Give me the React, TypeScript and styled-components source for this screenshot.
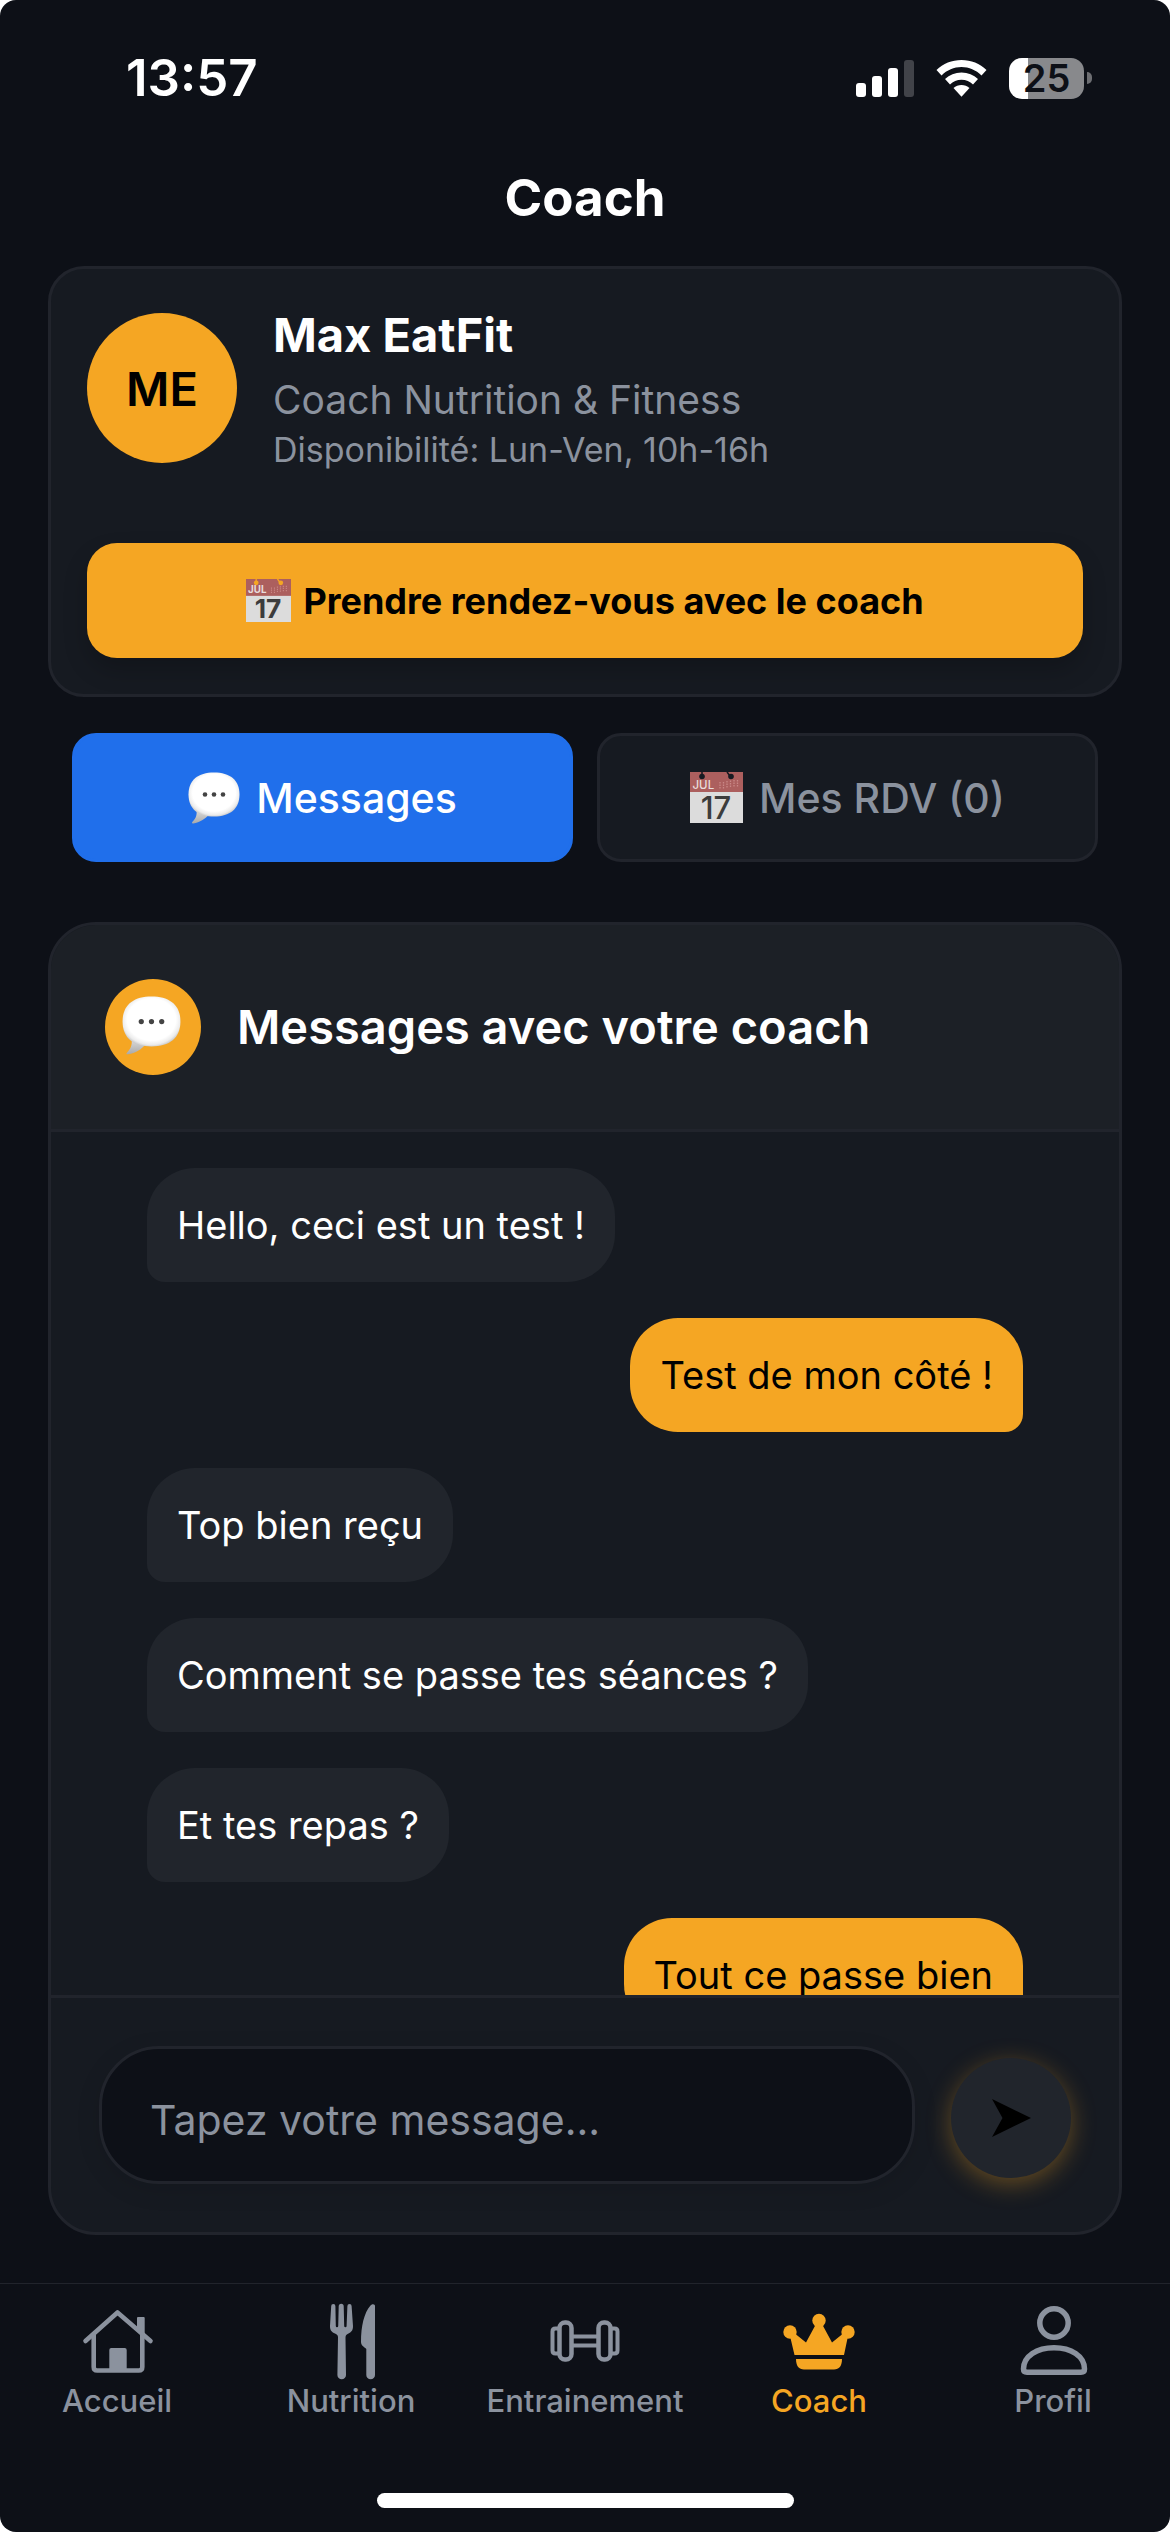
import React from 'react';
import styled, { createGlobalStyle } from 'styled-components';

const color = {
  page: '#0d1017',
  card: '#161a21',
  header: '#1c2026',
  line: '#21242c',
  bubble: '#21252c',
  muted: '#8b929e',
  amber: '#f5a623',
  blue: '#206feb',
};

const GlobalStyle = createGlobalStyle`
  * { box-sizing: border-box; }
  html, body { margin: 0; background: #fff; }
  body, button, input { font-family: Inter, 'Liberation Sans', sans-serif; }
  h1, h2, p, ul { margin: 0; padding: 0; }
`;

const Screen = styled.div`
  display: flex;
  flex-direction: column;
  min-height: 100vh;
  background: ${color.page};
  border-radius: 16px;
  overflow: hidden;
`;

const StatusBar = styled.div`
  display: flex;
  justify-content: space-between;
  align-items: center;
  height: 156px;
  padding: 0 78px 0 126px;
  color: #fff;
`;

const Clock = styled.time`
  font-size: 51px;
  font-weight: 600;
  line-height: 60px;
`;

const StatusIcons = styled.div`
  display: flex;
  align-items: center;
  gap: 22px;
`;

const Battery = styled.div`
  display: flex;
  align-items: center;
  gap: 3px;
`;

const BatteryBody = styled.div`
  display: flex;
  align-items: center;
  justify-content: center;
  width: 75px;
  height: 41px;
  border-radius: 13px;
  background: linear-gradient(to right, #fff 25%, #88898c 25%);
  color: ${color.page};
  font-size: 38px;
  font-weight: 600;
  line-height: 41px;
`;

const BatteryTip = styled.div`
  width: 5px;
  height: 12px;
  border-radius: 0 5px 5px 0;
  background: #6d6e72;
`;

const TitleBar = styled.header`
  display: flex;
  justify-content: center;
  height: 110px;
  padding-top: 10px;
  color: #fff;
`;

const Title = styled.h1`
  font-size: 51px;
  font-weight: 700;
  line-height: 64px;
`;

const Main = styled.main`
  display: flex;
  flex-direction: column;
  flex: 1;
  min-height: 0;
  padding: 0 48px;
`;

const Card = styled.section`
  border: 3px solid ${color.line};
  border-radius: 36px;
  background: ${color.card};
  padding: 36px;
`;

const CoachRow = styled.div`
  display: flex;
  align-items: center;
  gap: 36px;
  padding-bottom: 72px;
`;

const Avatar = styled.div`
  display: flex;
  align-items: center;
  justify-content: center;
  width: 150px;
  height: 150px;
  border-radius: 50%;
  background: ${color.amber};
  color: #000;
  font-size: 47px;
  font-weight: 600;
`;

const Heading = styled.h2<{ $bold?: boolean }>`
  color: #fff;
  font-size: 47px;
  font-weight: ${p => (p.$bold ? 700 : 600)};
  line-height: 60px;
`;

const Muted = styled.p<{ $small?: boolean }>`
  margin-top: ${p => (p.$small ? 4 : 9)}px;
  color: ${color.muted};
  font-size: ${p => (p.$small ? 34 : 39)}px;
  line-height: ${p => (p.$small ? 42 : 51)}px;
`;

const BookButton = styled.button`
  display: flex;
  align-items: center;
  justify-content: center;
  gap: 12px;
  width: 100%;
  height: 115px;
  border: 0;
  border-radius: 30px;
  background: ${color.amber};
  box-shadow: 0 12px 24px rgba(0, 0, 0, 0.2);
  color: #000;
  font-size: 36px;
  font-weight: 700;
`;

const Tabs = styled.div`
  display: flex;
  gap: 24px;
  padding: 36px 24px 60px;
`;

const Tab = styled.button<{ $active?: boolean }>`
  display: flex;
  flex: 1;
  align-items: center;
  justify-content: center;
  gap: 16px;
  height: 129px;
  border: 3px solid ${p => (p.$active ? color.blue : color.line)};
  border-radius: 24px;
  background: ${p => (p.$active ? color.blue : color.card)};
  color: ${p => (p.$active ? '#fff' : color.muted)};
  font-size: 41px;
  font-weight: 500;
`;

const ChatPanel = styled.section`
  display: flex;
  flex: 1;
  flex-direction: column;
  min-height: 0;
  border: 3px solid ${color.line};
  border-radius: 48px;
  background: ${color.card};
  overflow: hidden;
`;

const ChatHeader = styled.header`
  display: flex;
  align-items: center;
  gap: 36px;
  padding: 54px;
  border-bottom: 3px solid ${color.line};
  background: ${color.header};
`;

const ChatBadge = styled.div`
  display: flex;
  align-items: center;
  justify-content: center;
  width: 96px;
  height: 96px;
  padding: 0 3px 3px 0;
  border-radius: 50%;
  background: ${color.amber};
`;

const MessageList = styled.ul`
  display: flex;
  flex: 1 1 0;
  flex-direction: column;
  gap: 36px;
  min-height: 0;
  padding: 36px 96px;
  list-style: none;
  overflow: hidden;
`;

const Bubble = styled.li<{ $mine?: boolean }>`
  flex: none;
  align-self: ${p => (p.$mine ? 'flex-end' : 'flex-start')};
  padding: 30px;
  border-radius: ${p => (p.$mine ? '48px 48px 18px 48px' : '48px 48px 48px 18px')};
  background: ${p => (p.$mine ? color.amber : color.bubble)};
  color: ${p => (p.$mine ? '#000' : '#fff')};
  font-size: 38px;
  line-height: 54px;
`;

const Composer = styled.form`
  display: flex;
  align-items: flex-end;
  gap: 36px;
  padding: 48px;
  border-top: 3px solid ${color.line};
`;

const MessageInput = styled.input`
  flex: 1;
  min-width: 0;
  height: 138px;
  padding: 9px 48px 0;
  border: 3px solid ${color.line};
  border-radius: 60px;
  background: ${color.page};
  box-shadow: 0 6px 24px rgba(0, 0, 0, 0.1);
  color: #fff;
  font-size: 41px;
  outline: 0;
  &::placeholder { color: ${color.muted}; opacity: 1; }
`;

const SendButton = styled.button`
  display: flex;
  align-items: center;
  justify-content: center;
  width: 120px;
  height: 120px;
  margin-bottom: 6px;
  padding: 0;
  border: 0;
  border-radius: 50%;
  background: ${color.bubble};
  box-shadow: 0 6px 24px rgba(245, 166, 35, 0.35);
`;

const TabBar = styled.nav`
  display: flex;
  margin-top: 48px;
  padding-top: 18px;
  border-top: 1px solid ${color.line};
`;

const NavLink = styled.a<{ $active?: boolean }>`
  display: flex;
  flex: 1 1 0;
  min-width: 0;
  flex-direction: column;
  align-items: center;
  gap: 3px;
  color: ${p => (p.$active ? color.amber : color.muted)};
  font-size: 31px;
  font-weight: 500;
  line-height: 36px;
  text-decoration: none;
`;

const HomeArea = styled.div`
  display: flex;
  justify-content: center;
  padding: 74px 0 24px;
`;

const HomeIndicator = styled.div`
  width: 417px;
  height: 15px;
  border-radius: 8px;
  background: #fff;
`;

const SpeechIcon = ({ size, id }: { size: number; id: string }) => (
  <svg width={size} height={size} viewBox="0 0 52 52" aria-hidden="true">
    <defs>
      <radialGradient id={`${id}-body`} cx="50%" cy="46%" r="60%">
        <stop offset="0.7" stopColor="#fff" />
        <stop offset="0.84" stopColor="#ececec" />
        <stop offset="1" stopColor="#a8a8a8" />
      </radialGradient>
      <linearGradient id={`${id}-tail`} x1="0" y1="0" x2="0" y2="1">
        <stop offset="0" stopColor="#e4e4e4" />
        <stop offset="1" stopColor="#a9a9a9" />
      </linearGradient>
    </defs>
    <path
      d="M8 36c1.500 5.500.5 10-3.500 13.800-1 1-.6 1.800.8 1.600C12 50.500 17 47 21 42.500Z"
      fill={`url(#${id}-tail)`}
    />
    <path
      d="M26 .5C42 .5 51.500 8 51.500 22.500S42 44.500 26 44.500.5 37 .5 22.500 10 .5 26 .5Z"
      fill={`url(#${id}-body)`}
    />
    <circle cx="17" cy="22.500" r="2.300" fill="#444" />
    <circle cx="26" cy="22.500" r="2.300" fill="#444" />
    <circle cx="35" cy="22.500" r="2.300" fill="#444" />
  </svg>
);

const CalendarIcon = ({ width, height, hole }: { width: number; height: number; hole: string }) => (
  <svg width={width} height={height} viewBox="0 0 53 51" preserveAspectRatio="none" overflow="visible" aria-hidden="true">
    <rect width="53" height="51" fill="#dcdcdc" />
    <rect width="53" height="20" fill="#ac5f5e" />
    <path d="M12 0v4M37 0l3 4" stroke={hole} strokeWidth="1.500" />
    <circle cx="12" cy="4.500" r="2.800" fill={hole} />
    <circle cx="41" cy="4.500" r="2.800" fill={hole} />
    <path d="M30 10v7M33.500 10v7M37 9v7M40.500 8.500v7M44 8v7M47.500 8v7" stroke="#c98886" strokeWidth="1.300" strokeDasharray="1.500 1" />
    <text x="2.500" y="17" fontSize="11.500" fill="#e8dcdc" fontFamily="Inter, sans-serif">JUL</text>
    <text x="26" y="46.500" fontSize="31" fill="#3c3c3c" textAnchor="middle" fontFamily="Inter, sans-serif">17</text>
  </svg>
);

const navIcons = {
  home: (
    <g fill="none" stroke="currentColor" strokeLinecap="round" strokeLinejoin="round" strokeWidth="4.600">
      <path d="M7.500 39 39.500 10.500 72.500 39" />
      <path d="M15.700 33v32q0 3.500 3.500 3.500h41.600q3.500 0 3.500-3.500V33" />
      <path d="M32.300 68V48q0-1 1-1h13.400q1 0 1 1v20Z" fill="currentColor" strokeWidth="2" />
      <path d="M60 16v12l5.700 5V16Z" fill="currentColor" strokeWidth="2" />
    </g>
  ),
  food: (
    <g fill="currentColor">
      <path d="M19.200 4a2.100 2.100 0 0 1 4.200 0l.4 20q0 1.200 1.200 1.200t1.200-1.200l.5-19.800a2.500 2.500 0 0 1 5 0l.5 19.800q0 1.200 1.200 1.200t1.200-1.200L35.400 4a2.100 2.100 0 0 1 4.200 0L41 24c0 5-2 6-4.500 7.500-2 1-3 1.500-3 4L34 73a4.300 4.300 0 0 1-8.600 0l.6-37.500c0-2.500-1-3-3-4C20 30 18 29 18 24Z" />
      <path d="M63 4v69a4.300 4.300 0 0 1-8.700 0V47c-1.500-2-5.300-3-5.300-7C49 24 52 11 58.500 3.500c2-2.200 4.500-1.500 4.500.5Z" />
    </g>
  ),
  gym: (
    <g fill="none" stroke="currentColor" strokeWidth="4.500">
      <rect x="13.500" y="20.500" width="12" height="37" rx="5.500" />
      <rect x="52.500" y="20.500" width="12" height="37" rx="5.500" />
      <path d="M25.500 34.500h27M25.500 43.500h27M13 26.500H9.500q-3 0-3 3v19q0 3 3 3H13M65 26.500h3.500q3 0 3 3v19q0 3-3 3H65" strokeWidth="4" />
    </g>
  ),
  crown: (
    <g fill="currentColor">
      <circle cx="39" cy="18.500" r="6.700" />
      <circle cx="10" cy="30" r="6.700" />
      <circle cx="68" cy="30" r="6.700" />
      <path d="M10 34 13 30 26 40.500 36 22h6l10 18.500L65 30l3 4-4 19H14.500Z" />
      <path d="M16 57h46c0 7-3 10.500-8 10.500H24c-5 0-8-3.500-8-10.500Z" />
    </g>
  ),
  user: (
    <g fill="none" stroke="currentColor" strokeWidth="5.500" strokeLinejoin="round">
      <circle cx="40" cy="21" r="14.200" />
      <path d="M9.500 67C9.500 54 23 45.700 40 45.700S70.500 54 70.500 67q0 3.200-3.500 3.200H13q-3.500 0-3.500-3.200Z" />
    </g>
  ),
};

const navItems: { label: string; icon: keyof typeof navIcons; active?: boolean }[] = [
  { label: 'Accueil', icon: 'home' },
  { label: 'Nutrition', icon: 'food' },
  { label: 'Entrainement', icon: 'gym' },
  { label: 'Coach', icon: 'crown', active: true },
  { label: 'Profil', icon: 'user' },
];

const messages = [
  { text: 'Hello, ceci est un test !' },
  { text: 'Test de mon côté !', mine: true },
  { text: 'Top bien reçu' },
  { text: 'Comment se passe tes séances ?' },
  { text: 'Et tes repas ?' },
  { text: 'Tout ce passe bien', mine: true },
];

export default function App() {
  return (
    <>
      <GlobalStyle />
      <Screen>
        <StatusBar>
          <Clock>13:57</Clock>
          <StatusIcons>
            <svg width="58" height="38" viewBox="0 0 58 38" fill="#fff" aria-hidden="true">
              <rect x="0" y="24" width="10" height="14" rx="3" />
              <rect x="16" y="17" width="10" height="21" rx="3" />
              <rect x="32" y="9" width="10" height="29" rx="3" />
              <rect x="48" y="1" width="10" height="37" rx="3" fill="#414349" />
            </svg>
            <svg width="51" height="38" viewBox="0 0 51 38" fill="#fff" aria-hidden="true">
              <path d="M25.500 1C35 1 44 4.500 50.500 11l-5 5.500C40 11 33 8 25.500 8S11 11 5.500 16.500l-5-5.500C7 4.500 16 1 25.500 1Z" />
              <path d="M25.500 13.500c6.500 0 12 2.300 16.500 6.500l-5 5.500c-3-3-7-4.800-11.500-4.800S17 22.500 14 25.500L9 20c4.500-4.200 10-6.500 16.500-6.500Z" />
              <path d="M25.500 26c3 0 5.800 1.200 8 3l-8 8.700-8-8.700c2.200-1.800 5-3 8-3Z" />
            </svg>
            <Battery>
              <BatteryBody>25</BatteryBody>
              <BatteryTip />
            </Battery>
          </StatusIcons>
        </StatusBar>
        <TitleBar>
          <Title>Coach</Title>
        </TitleBar>
        <Main>
          <Card>
            <CoachRow>
              <Avatar>ME</Avatar>
              <div>
                <Heading $bold>Max EatFit</Heading>
                <Muted>Coach Nutrition &amp; Fitness</Muted>
                <Muted $small>Disponibilité: Lun-Ven, 10h-16h</Muted>
              </div>
            </CoachRow>
            <BookButton type="button">
              <CalendarIcon width={45} height={43} hole={color.amber} />
              Prendre rendez-vous avec le coach
            </BookButton>
          </Card>
          <Tabs>
            <Tab type="button" $active>
              <SpeechIcon size={52} id="speech-tab" />
              Messages
            </Tab>
            <Tab type="button">
              <CalendarIcon width={53} height={51} hole={color.card} />
              Mes RDV (0)
            </Tab>
          </Tabs>
          <ChatPanel>
            <ChatHeader>
              <ChatBadge>
                <SpeechIcon size={59} id="speech-header" />
              </ChatBadge>
              <Heading>Messages avec votre coach</Heading>
            </ChatHeader>
            <MessageList>
              {messages.map(m => (
                <Bubble key={m.text} $mine={m.mine}>{m.text}</Bubble>
              ))}
            </MessageList>
            <Composer onSubmit={e => e.preventDefault()}>
              <MessageInput type="text" aria-label="Votre message" placeholder="Tapez votre message..." />
              <SendButton type="submit" aria-label="Envoyer">
                <svg width="39" height="38" viewBox="0 0 39 38" aria-hidden="true">
                  <path d="M0 0 39 19 0 38 10.500 19Z" fill="#000" />
                </svg>
              </SendButton>
            </Composer>
          </ChatPanel>
        </Main>
        <TabBar>
          {navItems.map(item => (
            <NavLink key={item.label} href="#" $active={item.active}>
              <svg width="78" height="78" viewBox="0 0 78 78" aria-hidden="true">{navIcons[item.icon]}</svg>
              {item.label}
            </NavLink>
          ))}
        </TabBar>
        <HomeArea>
          <HomeIndicator />
        </HomeArea>
      </Screen>
    </>
  );
}
